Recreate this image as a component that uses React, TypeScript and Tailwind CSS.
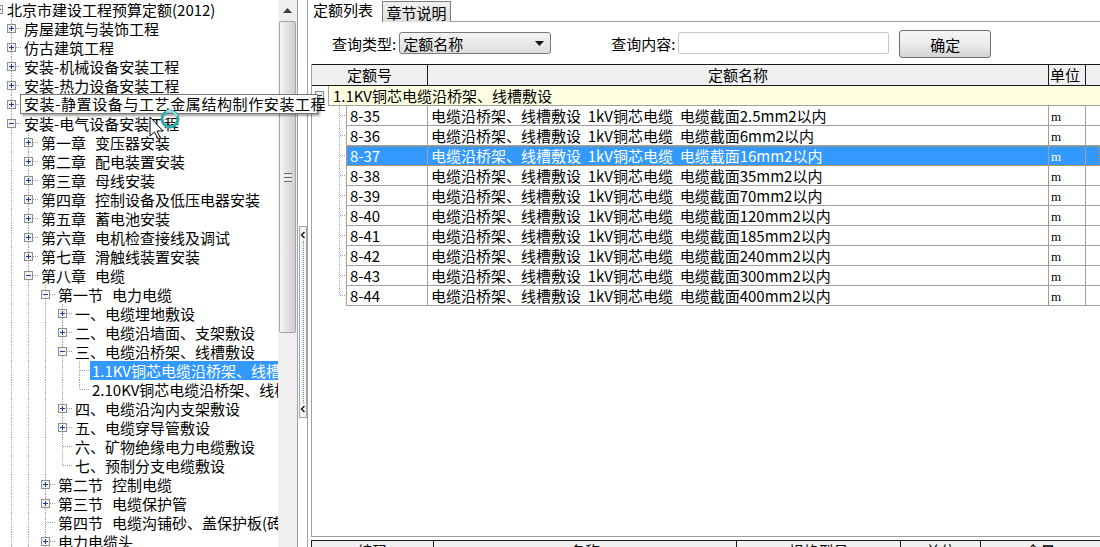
import React from "react";

type Exp = "+" | "-" | "";
type TreeNode = { level: number; label: string; sub?: string; exp: Exp; selected?: boolean };

const nodes: TreeNode[] = [
  { level: 1, label: "房屋建筑与装饰工程", exp: "+" },
  { level: 1, label: "仿古建筑工程", exp: "+" },
  { level: 1, label: "安装-机械设备安装工程", exp: "+" },
  { level: 1, label: "安装-热力设备安装工程", exp: "+" },
  { level: 1, label: "安装-静置设备与工艺金属结构制作安装工程", exp: "+" },
  { level: 1, label: "安装-电气设备安装工程", exp: "-" },
  { level: 2, label: "第一章", sub: "变压器安装", exp: "+" },
  { level: 2, label: "第二章", sub: "配电装置安装", exp: "+" },
  { level: 2, label: "第三章", sub: "母线安装", exp: "+" },
  { level: 2, label: "第四章", sub: "控制设备及低压电器安装", exp: "+" },
  { level: 2, label: "第五章", sub: "蓄电池安装", exp: "+" },
  { level: 2, label: "第六章", sub: "电机检查接线及调试", exp: "+" },
  { level: 2, label: "第七章", sub: "滑触线装置安装", exp: "+" },
  { level: 2, label: "第八章", sub: "电缆", exp: "-" },
  { level: 3, label: "第一节", sub: "电力电缆", exp: "-" },
  { level: 4, label: "一、电缆埋地敷设", exp: "+" },
  { level: 4, label: "二、电缆沿墙面、支架敷设", exp: "+" },
  { level: 4, label: "三、电缆沿桥架、线槽敷设", exp: "-" },
  { level: 5, label: "1.1KV铜芯电缆沿桥架、线槽敷设", exp: "", selected: true },
  { level: 5, label: "2.10KV铜芯电缆沿桥架、线槽敷设", exp: "" },
  { level: 4, label: "四、电缆沿沟内支架敷设", exp: "+" },
  { level: 4, label: "五、电缆穿导管敷设", exp: "+" },
  { level: 4, label: "六、矿物绝缘电力电缆敷设", exp: "" },
  { level: 4, label: "七、预制分支电缆敷设", exp: "" },
  { level: 3, label: "第二节", sub: "控制电缆", exp: "+" },
  { level: 3, label: "第三节", sub: "电缆保护管", exp: "+" },
  { level: 3, label: "第四节", sub: "电缆沟铺砂、盖保护板(砖)", exp: "" },
  { level: 3, label: "电力电缆头", exp: "+" },
];

const sizes = ["2.5", "6", "16", "35", "70", "120", "185", "240", "300", "400"];

const dot = {
  stroke: "#a0a0a0",
  strokeWidth: 1,
  strokeDasharray: "1 1",
  shapeRendering: "crispEdges" as const,
};

function hasNext(i: number) {
  const L = nodes[i].level;
  for (let j = i + 1; j < nodes.length; j++) {
    if (nodes[j].level < L) return false;
    if (nodes[j].level === L) return true;
  }
  return true;
}

function guidesFor(i: number) {
  const L = nodes[i].level;
  const out: boolean[] = [];
  for (let lv = 1; lv < L; lv++) {
    let a = i - 1;
    while (a >= 0 && nodes[a].level !== lv) a--;
    out.push(a >= 0 && hasNext(a));
  }
  return out;
}

function Box({ exp, x = 0 }: { exp: Exp; x?: number }) {
  return (
    <>
      <rect x={x + 0.5} y="5.5" width="8" height="8" fill="#f2f2f2" stroke="#8e8f8f" shapeRendering="crispEdges" />
      <line x1={x + 2} y1="9.5" x2={x + 7} y2="9.5" stroke="#1f3c88" shapeRendering="crispEdges" />
      {exp === "+" && <line x1={x + 4.5} y1="7" x2={x + 4.5} y2="12" stroke="#1f3c88" shapeRendering="crispEdges" />}
    </>
  );
}

function TreeRow({ node, idx }: { node: TreeNode; idx: number }) {
  const guides = guidesFor(idx);
  const next = hasNext(idx);
  return (
    <div className="flex h-[19px] items-center whitespace-nowrap">
      <div className="w-[7px] shrink-0" />
      {guides.map((g, i) => (
        <svg key={i} width="17" height="19" className="block shrink-0">
          {g && <line x1="4.5" y1="0" x2="4.5" y2="19" {...dot} />}
        </svg>
      ))}
      <svg width="17" height="19" className="block shrink-0">
        <line x1="4.5" y1="0" x2="4.5" y2={next ? 19 : 10} {...dot} />
        <line x1="4.5" y1="9.5" x2="14" y2="9.5" {...dot} />
        {node.exp && <Box exp={node.exp} />}
      </svg>
      <span className={node.selected ? "-ml-[2px] bg-[#3399ff] pl-[2px] pr-[4px] text-white" : ""}>
        {node.label}
        {node.sub && <span className="ml-[9px]">{node.sub}</span>}
      </span>
    </div>
  );
}

function LeftPane() {
  return (
    <div className="flex h-full w-[298px] shrink-0 border-r border-[#a0a0a0]">
      <div className="w-[278px] shrink-0 overflow-hidden">
        <div className="flex h-[19px] items-center whitespace-nowrap">
          <svg width="7" height="19" className="block shrink-0">
            <rect x="-5.5" y="5.5" width="8" height="8" fill="#f2f2f2" stroke="#8e8f8f" shapeRendering="crispEdges" />
            <line x1="-4" y1="9.5" x2="1" y2="9.5" stroke="#1f3c88" />
          </svg>
          <span>北京市建设工程预算定额(2012)</span>
        </div>
        {nodes.map((n, i) => (
          <TreeRow key={i} node={n} idx={i} />
        ))}
      </div>
      <div className="flex w-[19px] shrink-0 flex-col bg-[#efefef]">
        <div className="flex h-[21px] items-center justify-center">
          <svg width="9" height="5">
            <polygon points="0,5 9,5 4.5,0" fill="#3c3c3c" />
          </svg>
        </div>
        <div className="mx-[1px] flex h-[312px] items-center justify-center rounded-[2px] border border-[#a6a6a6] bg-gradient-to-r from-[#f4f4f4] via-[#e2e2e2] to-[#cfcfcf]">
          <div className="flex w-[8px] flex-col gap-[1px]">
            <div className="h-[1px] bg-[#6e6e6e]" />
            <div className="h-[1px] bg-[#f8f8f8]" />
            <div className="h-[1px] bg-[#6e6e6e]" />
            <div className="h-[1px] bg-[#f8f8f8]" />
            <div className="h-[1px] bg-[#6e6e6e]" />
          </div>
        </div>
      </div>
    </div>
  );
}

function Chevron() {
  return (
    <svg width="6" height="8" className="block">
      <polyline points="4.5,1 1.5,4 4.5,7" fill="none" stroke="#111" strokeWidth="1.4" />
    </svg>
  );
}

function Splitter() {
  return (
    <div className="h-full w-[10px] shrink-0 border-r border-[#a0a0a0]">
      <div className="ml-[1px] mt-[226px] flex h-[192px] w-[8px] flex-col items-center justify-between border border-[#a8a8a8] bg-[#f6f6f6] py-[4px]">
        <Chevron />
        <div className="w-0 flex-1 border-l border-dotted border-[#4a90dc] my-[2px]" />
        <Chevron />
      </div>
    </div>
  );
}

function DataRow({ code, size, last, selected }: { code: string; size: string; last: boolean; selected: boolean }) {
  return (
    <div className="flex h-[20px]">
      <svg width="34" height="20" className="block shrink-0">
        <line x1="27.5" y1="0" x2="27.5" y2={last ? 10 : 20} {...dot} />
        <line x1="27.5" y1="9.5" x2="34" y2="9.5" {...dot} />
      </svg>
      <div
        className={`flex flex-1 border-b border-[#a0a0a0] ${
          selected ? "bg-[#3399ff] text-white outline-1 -outline-offset-1 outline-dotted outline-[#c98a3c]" : ""
        }`}
      >
        <div className="w-[82px] shrink-0 border-x border-[#a0a0a0] pl-[3px] leading-[19px]">{code}</div>
        <div className="w-[621px] shrink-0 border-r border-[#a0a0a0] pl-[3px] leading-[19px] whitespace-pre">
          {`电缆沿桥架、线槽敷设  1kV铜芯电缆  电缆截面${size}mm2以内`}
        </div>
        <div className="w-[37px] shrink-0 border-r border-[#a0a0a0] pl-[2px] text-[13px] leading-[21px] font-['Liberation_Serif',serif]">
          m
        </div>
        <div className="flex-1" />
      </div>
    </div>
  );
}

function RightPane() {
  return (
    <div className="flex h-full flex-1 flex-col">
      {/* tabs */}
      <div className="flex h-[22px] shrink-0">
        <div className="w-[74px] pl-[5px] leading-[19px]">定额列表</div>
        <div className="mt-[1px] flex h-[21px] w-[69px] items-center justify-center border-x border-t border-[#7d7d7d] bg-gradient-to-b from-[#f0f0f0] to-[#dedede]">
          章节说明
        </div>
        <div className="flex-1 border-b border-[#a0a0a0]" />
      </div>

      {/* query bar */}
      <div className="flex h-[42px] shrink-0 items-center pl-[24px]">
        <span>查询类型:</span>
        <div className="ml-[3px] flex h-[22px] w-[152px] items-center justify-between rounded-[3px] border border-[#7a7a7a] bg-gradient-to-b from-[#f4f4f4] to-[#dedede] pl-[3px] pr-[6px]">
          <span>定额名称</span>
          <svg width="9" height="5">
            <polygon points="0,0 9,0 4.5,5" fill="#111" />
          </svg>
        </div>
        <span className="ml-[60px]">查询内容:</span>
        <div className="ml-[3px] h-[22px] w-[211px] rounded-[2px] border border-[#c8c8c8] bg-white" />
        <div className="ml-[10px] mt-[2px] flex h-[28px] w-[92px] items-center justify-center rounded-[3px] border border-[#707070] bg-gradient-to-b from-[#f5f5f5] via-[#ebebeb] to-[#d4d4d4]">
          确定
        </div>
      </div>

      {/* table */}
      <div className="ml-[3px] flex h-[473px] shrink-0 flex-col border-b border-l border-[#a0a0a0]">
        <div className="flex h-[22px] shrink-0 border-y border-[#1a1a1a] bg-[#f0f0f0] leading-[20px]">
          <div className="w-[116px] shrink-0 border-r border-[#1a1a1a] text-center">定额号</div>
          <div className="w-[621px] shrink-0 border-r border-[#1a1a1a] text-center">定额名称</div>
          <div className="w-[37px] shrink-0 border-r border-[#1a1a1a] pl-[1px]">单位</div>
          <div className="flex-1" />
        </div>
        <div className="flex h-[20px] shrink-0">
          <svg width="16" height="20" className="block shrink-0">
            <Box exp="-" x={3} />
          </svg>
          <div className="flex-1 border-b border-l border-[#a0a0a0] bg-[#ffffe1] pl-[4px] leading-[19px] whitespace-nowrap">
            1.1KV铜芯电缆沿桥架、线槽敷设
          </div>
        </div>
        {sizes.map((s, i) => (
          <DataRow key={s} code={`8-${35 + i}`} size={s} last={i === sizes.length - 1} selected={i === 2} />
        ))}
        <div className="flex-1" />
      </div>

      {/* lower table header (cut off) */}
      <div className="ml-[3px] mt-[3px] flex h-[22px] shrink-0 border-l border-t border-[#1a1a1a] bg-[#f0f0f0] leading-[20px]">
        <div className="w-[122px] shrink-0 border-r border-[#1a1a1a] text-center">编码</div>
        <div className="w-[303px] shrink-0 border-r border-[#1a1a1a] text-center">名称</div>
        <div className="w-[164px] shrink-0 border-r border-[#1a1a1a] text-center">规格型号</div>
        <div className="w-[80px] shrink-0 border-r border-[#1a1a1a] text-center">单位</div>
        <div className="flex-1 text-center">含量</div>
      </div>
    </div>
  );
}

export default function App() {
  return (
    <div className="relative flex h-[547px] w-[1100px] overflow-hidden bg-white text-[15px] leading-[19px] text-black font-['Noto_Sans_CJK_SC','Noto_Sans',sans-serif]">
      <LeftPane />
      <Splitter />
      <RightPane />

      {/* tooltip */}
      <div className="absolute left-[20px] top-[94px] h-[20px] w-[298px] whitespace-nowrap border border-[#767676] bg-white pl-[3px] text-[15px] leading-[18px] tracking-[0.6px] shadow-[2px_2px_2px_rgba(0,0,0,0.35)]">
        安装-静置设备与工艺金属结构制作安装工程
      </div>

      {/* busy cursor */}
      <svg width="34" height="36" className="absolute left-[148px] top-[106px]">
        <circle cx="22" cy="13" r="8" fill="none" stroke="#2fa9b0" strokeWidth="3" />
        <path d="M 18 6 A 8 8 0 0 1 29 10" fill="none" stroke="#9fe3e6" strokeWidth="2" />
        <polygon points="2,11 2,30 6.5,26 10,33 12.5,32 9,25 15,25" fill="#fff" stroke="#000" strokeWidth="1" strokeLinejoin="round" />
      </svg>
    </div>
  );
}
